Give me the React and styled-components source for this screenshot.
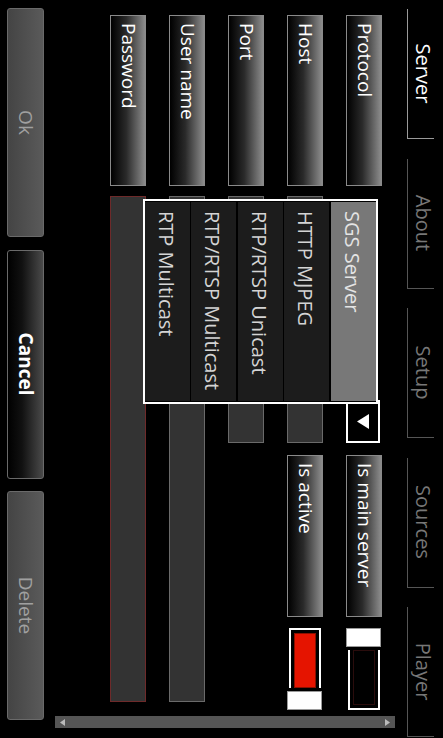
import React from "react";
import styled, { createGlobalStyle } from "styled-components";

const Global = createGlobalStyle`
  html, body { margin: 0; padding: 0; background: #000; }
  * { box-sizing: border-box; }
`;

const Stage = styled.div`
  width: 443px;
  height: 738px;
  overflow: hidden;
  background: #000;
`;

/* the page is a landscape form turned a quarter clockwise */
const Landscape = styled.div`
  width: 738px;
  height: 443px;
  transform-origin: 0 0;
  transform: translateX(443px) rotate(90deg);
  display: flex;
  flex-direction: column;
  font-family: "Open Sans", "Noto Sans", sans-serif;
  color: #fff;
  background: #000;
`;

const TabBar = styled.div`
  display: flex;
  align-items: flex-end;
  gap: 19.5px;
  height: 36px;
  padding-left: 9px;
`;

const Tab = styled.div`
  width: 130px;
  height: 27px;
  padding-top: 1px;
  border-bottom: 1px solid ${(p) => (p.$active ? "#9a9a9a" : "#555")};
  border-right: 1px solid ${(p) => (p.$active ? "#9a9a9a" : "#555")};
  text-align: center;
  font-size: 20px;
  line-height: 20px;
  color: ${(p) => (p.$active ? "#fff" : "#777")};
`;

const Body = styled.div`
  flex: 1;
  display: flex;
`;

const Form = styled.div`
  flex: 1;
  display: flex;
  flex-direction: column;
  gap: 23px;
  padding: 25px 0 0 15px;
`;

const Row = styled.div`
  display: flex;
  align-items: center;
  height: 36px;
`;

const Label = styled.div`
  width: ${(p) => p.$w || 171}px;
  height: 36px;
  margin-left: ${(p) => p.$ml || 0}px;
  display: flex;
  align-items: center;
  padding: 0 0 2px 7px;
  border: 1px solid #8a8a8a;
  background: linear-gradient(to bottom, #8c8c8c 0%, #2a2a2a 55%, #000 100%);
  font-size: 19px;
  color: #fff;
  white-space: nowrap;
`;

const Field = styled.div`
  width: ${(p) => p.$w}px;
  height: 36px;
  margin-left: 10px;
  background: #333;
  border: 1px solid ${(p) => (p.$error ? "#6e2a2a" : "#6a6a6a")};
`;

const Combo = styled.div`
  position: relative;
  width: 247px;
  height: 34px;
  margin-left: 10px;
  align-self: flex-end;
  display: flex;
`;

const ComboField = styled.div`
  flex: 1;
`;

const ComboArrow = styled.div`
  width: 43px;
  border: 2px solid #fff;
  display: flex;
  align-items: center;
  justify-content: center;
`;

const Popup = styled.div`
  position: absolute;
  left: 3px;
  top: 2px;
  width: 205px;
  height: 235px;
  z-index: 2;
  border: 2px solid #fff;
  background: #000;
  padding: 0 1px;
  display: flex;
  flex-direction: column;
  gap: 1.5px;
`;

const Item = styled.div`
  height: 45px;
  flex-shrink: 0;
  padding: 1px 0 0 9px;
  font-size: 20px;
  line-height: 45px;
  white-space: nowrap;
  background: ${(p) => (p.$selected ? "#787878" : "#1c1c1c")};
  color: ${(p) => (p.$selected ? "#e4e4e4" : "#d4d4d4")};
`;

const Toggle = styled.div`
  width: 83px;
  height: 36px;
  margin-left: 11px;
  display: flex;
  align-items: center;
  gap: 3px;
`;

const Thumb = styled.div`
  width: 19px;
  height: 35px;
  background: #fff;
  border: 1px solid #9a9a9a;
`;

const Track = styled.div`
  width: 60px;
  height: 32px;
  display: flex;
  border: 2px solid #fff;
  ${(p) => (p.$on ? "border-right: none; padding: 3px 0 3px 3px;" : "border-left: none; padding: 3px 3px 3px 0;")}
`;

const Fill = styled.div`
  flex: 1;
  background: ${(p) => (p.$on ? "#e51400" : "#000")};
  border: 1px solid ${(p) => (p.$on ? "#8a1000" : "#2a0c0c")};
`;

const ScrollBar = styled.div`
  width: 12px;
  margin: 12px 10px 11px 0;
  background: #555;
  display: flex;
  flex-direction: column;
  align-items: center;
  justify-content: space-between;
  padding: 5px 0;
`;

const Footer = styled.div`
  display: flex;
  gap: 12.5px;
  height: 37px;
  margin-bottom: 7px;
  padding-left: 8px;
`;

const Button = styled.div`
  width: 229px;
  border: 1px solid #6a6a6a;
  border-radius: 3px;
  display: flex;
  align-items: center;
  justify-content: center;
  font-size: 19px;
  padding-bottom: 2px;
  font-weight: ${(p) => (p.$primary ? 700 : 400)};
  color: ${(p) => (p.$primary ? "#fff" : "#a0a0a0")};
  background: ${(p) =>
    p.$primary
      ? "linear-gradient(to bottom, #4a4a4a 0%, #111 60%, #000 100%)"
      : "linear-gradient(to bottom, #5a5a5a 0%, #444 100%)"};
`;

const Triangle = ({ w, h, up, color }) => (
  <svg width={w} height={h} viewBox={`0 0 ${w} ${h}`}>
    <polygon
      points={up ? `0,${h} ${w},${h} ${w / 2},0` : `0,0 ${w},0 ${w / 2},${h}`}
      fill={color}
    />
  </svg>
);

const tabs = ["Server", "About", "Setup", "Sources", "Player"];
const protocols = ["SGS Server", "HTTP MJPEG", "RTP/RTSP Unicast", "RTP/RTSP Multicast", "RTP Multicast"];

const Switch = ({ on }) => (
  <Toggle>
    {on ? (
      <>
        <Track $on>
          <Fill $on />
        </Track>
        <Thumb />
      </>
    ) : (
      <>
        <Thumb />
        <Track>
          <Fill />
        </Track>
      </>
    )}
  </Toggle>
);

export default function App() {
  return (
    <Stage>
      <Global />
      <Landscape>
        <TabBar>
          {tabs.map((t, i) => (
            <Tab key={t} $active={i === 0}>{t}</Tab>
          ))}
        </TabBar>
        <Body>
          <Form>
            <Row>
              <Label>Protocol</Label>
              <Combo>
                <ComboField />
                <ComboArrow>
                  <Triangle w={15} h={12} color="#fff" />
                </ComboArrow>
                <Popup>
                  {protocols.map((p, i) => (
                    <Item key={p} $selected={i === 0}>{p}</Item>
                  ))}
                </Popup>
              </Combo>
              <Label $w={162} $ml={12}>Is main server</Label>
              <Switch />
            </Row>
            <Row>
              <Label>Host</Label>
              <Field $w={247} />
              <Label $w={162} $ml={12}>Is active</Label>
              <Switch on />
            </Row>
            <Row>
              <Label>Port</Label>
              <Field $w={247} />
            </Row>
            <Row>
              <Label>User name</Label>
              <Field $w={506} />
            </Row>
            <Row>
              <Label>Password</Label>
              <Field $w={506} $error />
            </Row>
          </Form>
          <ScrollBar>
            <Triangle w={7} h={5} up color="#bbb" />
            <Triangle w={7} h={5} color="#bbb" />
          </ScrollBar>
        </Body>
        <Footer>
          <Button>Ok</Button>
          <Button $primary>Cancel</Button>
          <Button>Delete</Button>
        </Footer>
      </Landscape>
    </Stage>
  );
}
